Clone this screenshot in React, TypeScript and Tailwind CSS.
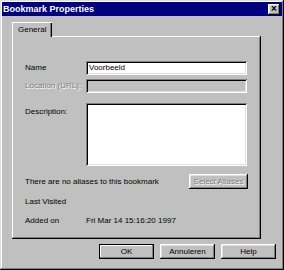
const raised =
  'shadow-[inset_-1px_-1px_#000,inset_1px_1px_#fff,inset_-2px_-2px_#808080,inset_2px_2px_#dfdfdf]'
const sunken =
  'shadow-[inset_1px_1px_#808080,inset_-1px_-1px_#fff,inset_2px_2px_#000,inset_-2px_-2px_#dfdfdf]'
const disabled = 'text-[#808080] [text-shadow:1px_1px_0_#fff]'

function Button({ label, isDefault }: { label: string; isDefault?: boolean }) {
  return (
    <button
      className={`flex h-[15px] w-[55px] items-center justify-center bg-[#c0c0c0] text-[8px] leading-none text-black ${
        isDefault
          ? 'border border-black shadow-[inset_-1px_-1px_#808080,inset_1px_1px_#fff]'
          : raised
      }`}
    >
      {label}
    </button>
  )
}

export default function App() {
  return (
    <div
      className={`flex h-[270px] w-[284px] flex-col bg-[#c0c0c0] p-[2px] font-['Liberation_Sans',Arial,sans-serif] text-[8px] text-black shadow-[inset_-1px_-1px_#000,inset_1px_1px_#dfdfdf,inset_-2px_-2px_#808080,inset_2px_2px_#fff]`}
    >
      {/* title bar */}
      <div className="flex h-[14px] items-center justify-between bg-[#000080] pl-[1px] pr-[2px]">
        <span className="text-[9px] font-bold leading-none text-white">Bookmark Properties</span>
        <button
          className={`flex h-[11px] w-[12px] items-center justify-center bg-[#c0c0c0] text-[10px] font-bold leading-none text-black ${raised}`}
        >
          ×
        </button>
      </div>

      <div className="pl-[10px] pt-[6px]">
        {/* tab */}
        <div className="relative z-10 -mb-[1px] flex h-[15px] w-[40px] items-center bg-[#c0c0c0] pl-[6px] shadow-[inset_1px_1px_#fff,inset_-1px_0_#000,inset_-2px_0_#808080]">
          General
        </div>

        {/* tab page */}
        <div className="flex h-[203px] w-[249px] flex-col pl-[13px] pt-[25px] shadow-[inset_-1px_-1px_#000,inset_1px_1px_#fff,inset_-2px_-2px_#808080]">
          <div className="flex h-[14px] items-center">
            <span className="w-[61px]">Name</span>
            <div className={`flex h-[14px] w-[161px] items-center bg-white pl-[3px] ${sunken}`}>Voorbeeld</div>
          </div>
          <div className="mt-[4px] flex h-[14px] items-center">
            <span className={`w-[61px] ${disabled}`}>Location (URL):</span>
            <div className={`h-[14px] w-[161px] bg-[#c0c0c0] ${sunken}`} />
          </div>
          <div className="mt-[10px] flex">
            <span className="w-[61px] pt-[3px]">Description:</span>
            <div className={`h-[63px] w-[161px] bg-white ${sunken}`} />
          </div>
          <div className="mt-[8px] flex h-[15px] items-center justify-between pr-[13px]">
            <span>There are no aliases to this bookmark</span>
            <button className={`flex h-[15px] w-[59px] items-center justify-center bg-[#c0c0c0] ${raised} ${disabled}`}>
              Select Aliases
            </button>
          </div>
          <div className="mt-[6px] flex h-[14px] items-center">
            <span>Last Visited</span>
          </div>
          <div className="mt-[5px] flex h-[14px] items-center">
            <span className="w-[61px]">Added on</span>
            <span>Fri Mar 14 15:16:20 1997</span>
          </div>
        </div>
      </div>

      {/* dialog buttons */}
      <div className="mt-[5px] flex justify-end gap-[6px] pr-[6px]">
        <Button label="OK" isDefault />
        <Button label="Annuleren" />
        <Button label="Help" />
      </div>
    </div>
  )
}
